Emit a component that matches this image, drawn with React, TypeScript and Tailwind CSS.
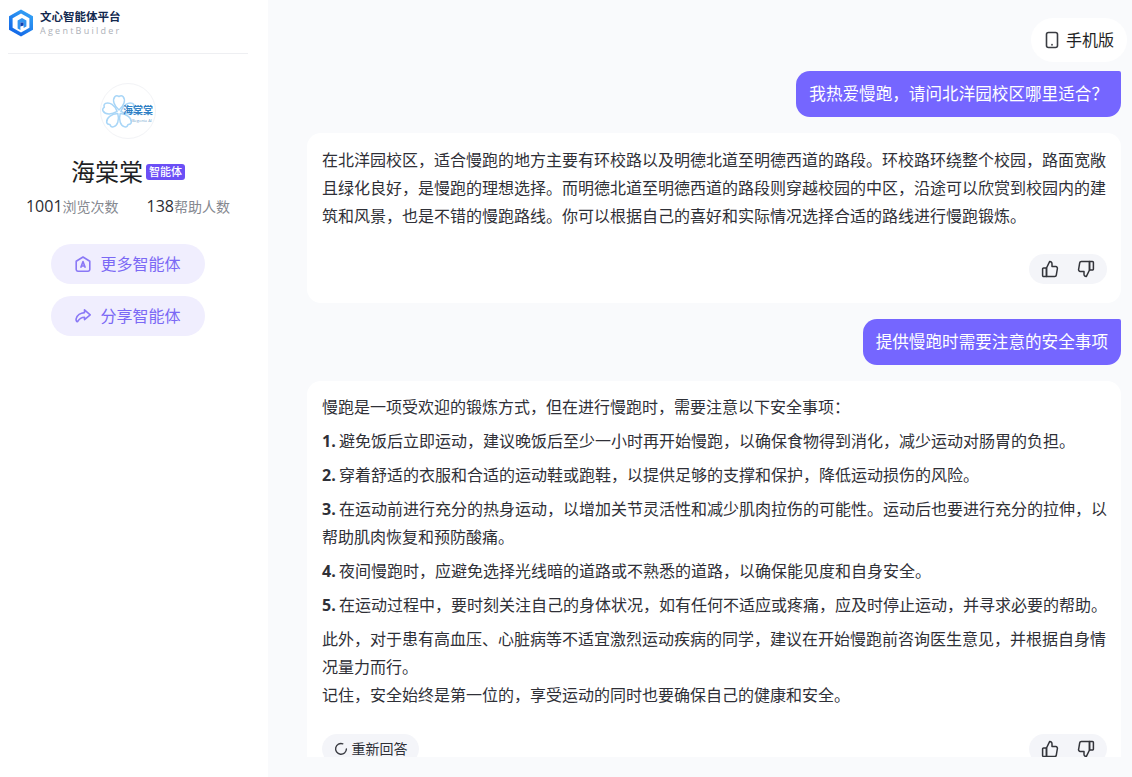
const font = { fontFamily: '"Open Sans", "Noto Sans CJK SC", sans-serif' };

function Logo() {
  return (
    <svg width="26" height="28" viewBox="0 0 26 28" className="shrink-0">
      <defs>
        <linearGradient id="lg" x1="0.8" y1="0" x2="0.2" y2="1">
          <stop offset="0" stopColor="#35a4f6" />
          <stop offset="1" stopColor="#0f62e6" />
        </linearGradient>
      </defs>
      <path d="M13 0.5 25 7.2V20.8L13 27.5 1 20.8V7.2Z" fill="url(#lg)" />
      <path d="M13 4.6 21.4 9.3V18.7L13 23.4 4.6 18.7V9.3Z" fill="#fff" />
      <path d="M9.6 11.5 14 9 18.4 11.5 18.4 17.5 15.6 19V13.4L12.4 13.4V21L9.6 19.4Z" fill="#3296f2" />
      <path d="M12.4 13.4H15.6V16.6L12.4 17.6Z" fill="#0d3fb0" />
    </svg>
  );
}

function Petal({ angle }: { angle: number }) {
  return (
    <path
      d="M0 -2C-5 -6 -7 -12 -4 -15.5C-2.5 -17 -1 -16.2 0 -15.4C1 -16.2 2.5 -17 4 -15.5C7 -12 5 -6 0 -2Z"
      transform={`translate(18 28) rotate(${angle})`}
    />
  );
}

function Avatar() {
  return (
    <div className="relative w-14 h-14 rounded-full border border-[#f2f3f6] bg-white overflow-hidden">
      <svg width="56" height="56" viewBox="0 0 56 56" className="absolute inset-0">
        <g fill="none" stroke="#a9d6f7" strokeWidth="1.5" strokeLinejoin="round">
          <Petal angle={0} />
          <Petal angle={72} />
          <Petal angle={144} />
          <Petal angle={216} />
          <Petal angle={288} />
        </g>
      </svg>
      <span className="absolute left-[22px] top-[20px] text-[10px] leading-[13px] font-bold text-[#2f7fc4] whitespace-nowrap">海棠棠</span>
      <span className="absolute left-[31px] top-[34px] text-[4px] leading-[5px] text-[#7aa9d0] whitespace-nowrap">Begonia AI</span>
    </div>
  );
}

function Sidebar() {
  return (
    <aside className="w-[268px] h-[777px] shrink-0 bg-white pl-2 pr-5 flex flex-col items-center">
      <div className="w-60 h-[54px] shrink-0 border-b border-[#eeeff2] flex items-start gap-[6px] pt-[9px]">
        <Logo />
        <div className="flex flex-col">
          <span className="text-[11.5px] leading-[15px] font-bold text-[#13294f]">文心智能体平台</span>
          <span className="text-[9px] leading-[12px] mt-[1px] tracking-[2.25px] text-[#adb1b8]">AgentBuilder</span>
        </div>
      </div>
      <div className="mt-[29px]">
        <Avatar />
      </div>
      <div className="mt-[17px] flex items-center gap-[3px]">
        <span className="text-2xl leading-8 text-[#1e1f24]">海棠棠</span>
        <span className="h-4 px-[3px] rounded-[3px] bg-[#6b4ff6] text-white text-[11px] leading-4 font-medium">智能体</span>
      </div>
      <div className="mt-[6px] flex items-center gap-7 text-sm leading-6">
        <div>
          <span className="text-[#2b2c33] text-base">1001</span>
          <span className="text-[#85888f]">浏览次数</span>
        </div>
        <div>
          <span className="text-[#2b2c33] text-base">138</span>
          <span className="text-[#85888f]">帮助人数</span>
        </div>
      </div>
      <button className="mt-[25px] w-[154px] h-10 rounded-[20px] bg-[#f0eefe] flex items-center justify-center gap-[9px] text-base leading-[42px] text-[#7b69f5]">
        <svg width="16" height="16" viewBox="0 0 16 16" fill="none" stroke="#8a78f6" strokeWidth="1.6">
          <path d="M8 1 14.8 5.2V13.6A1.6 1.6 0 0 1 13.2 15.2H2.8A1.6 1.6 0 0 1 1.2 13.6V5.2Z" strokeLinejoin="round" />
          <path d="M5.7 11.8 8 5.6 10.3 11.8M6.5 10H9.5" strokeLinejoin="round" />
        </svg>
        更多智能体
      </button>
      <button className="mt-3 w-[154px] h-10 rounded-[20px] bg-[#f0eefe] flex items-center justify-center gap-[9px] text-base leading-[42px] text-[#7b69f5]">
        <svg width="16" height="16" viewBox="0 0 16 16" fill="none" stroke="#8a78f6" strokeWidth="1.6" strokeLinejoin="round">
          <path d="M9.5 1.8 15.2 6.8 9.5 11.6V9.2C6 9.2 4.2 10.8 2.6 13.6 1.2 13.6.9 12 1.2 10.6 2 7.4 5.5 4.9 9.5 4.6Z" />
        </svg>
        分享智能体
      </button>
    </aside>
  );
}

function Thumb({ down }: { down?: boolean }) {
  return (
    <svg width="18" height="18" viewBox="0 0 18 18" fill="none" stroke="#33353b" strokeWidth="1.5" strokeLinejoin="round" className={down ? 'rotate-180' : ''}>
      <path d="M5.5 8H2.6A1 1 0 0 0 1.6 9V15.6A1 1 0 0 0 2.6 16.6H5.5Z" />
      <path d="M5.5 8 8.6 1.6C10 1.4 11 2.4 11 3.8V6.6H14.8A1.6 1.6 0 0 1 16.4 8.5L15.3 15.2A1.6 1.6 0 0 1 13.7 16.6H5.5Z" />
    </svg>
  );
}

function Feedback() {
  return (
    <div className="w-[78px] h-[30px] rounded-[15px] bg-[#f4f5f9] flex items-center justify-between px-[12px]">
      <Thumb />
      <Thumb down />
    </div>
  );
}

function UserBubble({ children }: { children: string }) {
  return (
    <div className="self-end shrink-0 mr-[11px] h-[46px] px-[13px] rounded-[14px] rounded-tr-[2px] bg-[#7566ff] text-white text-[16.6px] leading-[46px]">
      {children}
    </div>
  );
}

const steps: [string, string][] = [
  ['1.', '避免饭后立即运动，建议晚饭后至少一小时再开始慢跑，以确保食物得到消化，减少运动对肠胃的负担。'],
  ['2.', '穿着舒适的衣服和合适的运动鞋或跑鞋，以提供足够的支撑和保护，降低运动损伤的风险。'],
  ['3.', '在运动前进行充分的热身运动，以增加关节灵活性和减少肌肉拉伤的可能性。运动后也要进行充分的拉伸，以帮助肌肉恢复和预防酸痛。'],
  ['4.', '夜间慢跑时，应避免选择光线暗的道路或不熟悉的道路，以确保能见度和自身安全。'],
  ['5.', '在运动过程中，要时刻关注自己的身体状况，如有任何不适应或疼痛，应及时停止运动，并寻求必要的帮助。'],
];

export default function App() {
  return (
    <div className="w-[1132px] h-[777px] overflow-hidden flex bg-[#f9fafc]" style={font}>
      <Sidebar />
      <main className="flex-1 h-[757px] overflow-hidden flex flex-col">
        <div className="self-end shrink-0 mt-[18px] mr-[5px] h-11 w-24 rounded-[22px] bg-white flex items-center justify-center gap-[6px] text-base text-[#1e1f24]">
          <svg width="16" height="18" viewBox="0 0 16 18" fill="none" stroke="#3a3c42" strokeWidth="1.6">
            <rect x="2.5" y="1.5" width="11" height="15" rx="2" />
            <path d="M8 13.6v.4" strokeLinecap="round" />
          </svg>
          手机版
        </div>
        <div className="mt-[9px] shrink-0" />
        <UserBubble>我热爱慢跑，请问北洋园校区哪里适合？</UserBubble>
        <div className="mt-[16px] ml-[39px] mr-[11px] h-[170px] shrink-0 rounded-[14px] bg-white pl-[15px] pr-[14px] pt-[13px] flex flex-col text-base leading-[28px] text-[#2f3037]">
          <p>在北洋园校区，适合慢跑的地方主要有环校路以及明德北道至明德西道的路段。环校路环绕整个校园，路面宽敞且绿化良好，是慢跑的理想选择。而明德北道至明德西道的路段则穿越校园的中区，沿途可以欣赏到校园内的建筑和风景，也是不错的慢跑路线。你可以根据自己的喜好和实际情况选择合适的路线进行慢跑锻炼。</p>
          <div className="mt-auto mb-[19px] self-end">
            <Feedback />
          </div>
        </div>
        <div className="mt-[16px] shrink-0" />
        <UserBubble>提供慢跑时需要注意的安全事项</UserBubble>
        <div className="mt-[16px] ml-[39px] mr-[11px] shrink-0 rounded-[14px] bg-white pl-[15px] pr-[14px] pt-[12px] pb-[8px] text-base leading-[28px] text-[#2f3037]">
          <p>慢跑是一项受欢迎的锻炼方式，但在进行慢跑时，需要注意以下安全事项：</p>
          {steps.map(([n, t]) => (
            <p key={n} className="mt-[6px]">
              <b className="inline-block w-[17px] font-bold">{n}</b>{t}
            </p>
          ))}
          <p className="mt-[6px]">此外，对于患有高血压、心脏病等不适宜激烈运动疾病的同学，建议在开始慢跑前咨询医生意见，并根据自身情况量力而行。</p>
          <p>记住，安全始终是第一位的，享受运动的同时也要确保自己的健康和安全。</p>
          <div className="mt-[25px] flex items-center justify-between">
            <div className="h-[30px] w-[97px] rounded-[15px] bg-[#f4f5f9] flex items-center justify-center gap-[4px] text-sm text-[#2f3037]">
              <svg width="14" height="14" viewBox="0 0 14 14" fill="none" stroke="#3a3c42" strokeWidth="1.4" strokeLinecap="round">
                <path d="M8.8 1.8A5.4 5.4 0 1 0 12.4 7" />
              </svg>
              重新回答
            </div>
            <Feedback />
          </div>
        </div>
      </main>
    </div>
  );
}
